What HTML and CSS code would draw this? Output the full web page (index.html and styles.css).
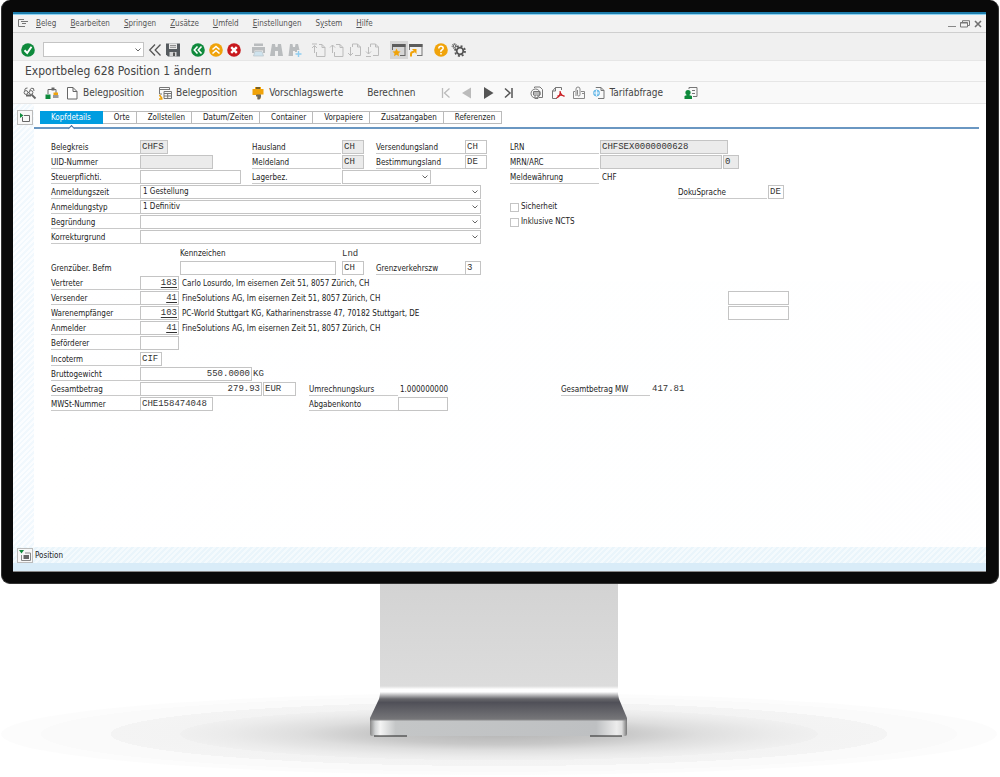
FILE: index.html
```html
<!DOCTYPE html>
<html lang="de">
<head>
<meta charset="utf-8">
<title>Exportbeleg 628 Position 1 ändern</title>
<link rel="stylesheet" href="styles.css">
</head>
<body>
<main class="monitor">
<div class="screen">

<nav class="menubar" aria-label="Menü">
  <button class="icon-small" aria-label="Systemmenü"><svg width="10" height="9" viewBox="0 0 10 9" fill="none" stroke="#777"><path d="M7 7.500H.5V.5H6M3 2.500H10M4 4.500H8"/></svg></button>
  <button><u>B</u>eleg</button>
  <button><u>B</u>earbeiten</button>
  <button><u>S</u>pringen</button>
  <button><u>Z</u>usätze</button>
  <button><u>U</u>mfeld</button>
  <button><u>E</u>instellungen</button>
  <button>S<u>y</u>stem</button>
  <button><u>H</u>ilfe</button>
  <div class="window-buttons">
    <button aria-label="Minimieren"><svg width="8" height="8" viewBox="0 0 8 8" stroke="#888"><path d="M0 6.500H8"/></svg></button>
    <button aria-label="Wiederherstellen"><svg width="10" height="8" viewBox="0 0 10 8" fill="none" stroke="#777"><path d="M.5 2.500H7.500V7H.5ZM.5 3H7.500M2.500 2V.7H9.500V5.500H8"/></svg></button>
    <button aria-label="Schliessen"><svg width="8" height="8" viewBox="0 0 8 8" stroke="#707070" stroke-width="1.600"><path d="M1 1L7 7M7 1L1 7"/></svg></button>
  </div>
</nav>

<div class="toolbar">
  <div class="tools">
    <button aria-label="Weiter"><svg viewBox="0 0 18 18"><circle cx="9" cy="9" r="6.800" fill="#0f8a3c"/><path d="M5.500 9.200L8.200 12L12.500 5.800" fill="none" stroke="#fff" stroke-width="2"/></svg></button>
  </div>
  <select class="command" aria-label="Befehl"><option></option></select>
  <div class="tools">
    <button aria-label="Einklappen"><svg viewBox="0 0 18 18" fill="none" stroke="#555" stroke-width="1.300"><path d="M9 3.500L3.700 9L9 14.500M14.500 3.500L9.200 9L14.500 14.500"/></svg></button>
    <button aria-label="Sichern"><svg viewBox="0 0 18 18"><path d="M2 2.500H16V15.500H4L2 13.500Z" fill="#555a5e"/><path d="M5 2.500H13V8H5Z" fill="#e8e8e8"/><path d="M6 4.500H12M6 6.300H12" stroke="#777" stroke-width=".8"/><path d="M5.500 11H12.500V15.500H5.500Z" fill="#d4d4d4"/><path d="M9 11.500H11V15H9Z" fill="#555"/></svg></button>
  </div>
  <div class="tools">
    <button aria-label="Zurück"><svg viewBox="0 0 18 18"><circle cx="9" cy="9" r="6.800" fill="#0f8a3c"/><path d="M8.500 5.500L5.300 9L8.500 12.500M12.500 5.500L9.300 9L12.500 12.500" fill="none" stroke="#fff" stroke-width="1.600"/></svg></button>
    <button aria-label="Beenden"><svg viewBox="0 0 18 18"><circle cx="9" cy="9" r="6.800" fill="#f0a30a"/><path d="M5.500 8.500L9 5.500L12.500 8.500M5.500 12.500L9 9.500L12.500 12.500" fill="none" stroke="#fff" stroke-width="1.600"/></svg></button>
    <button aria-label="Abbrechen"><svg viewBox="0 0 18 18"><circle cx="9" cy="9" r="6.800" fill="#c8191e"/><path d="M6.200 6.200L11.800 11.800M11.800 6.200L6.200 11.800" stroke="#fff" stroke-width="2.400"/></svg></button>
  </div>
  <div class="tools">
    <button aria-label="Drucken"><svg viewBox="0 0 18 18" fill="#b9bcbe"><path d="M4 2.500H13V5H4ZM2 6H15V12H13V9.500H4.500V12H2Z"/><path d="M5 10.500H12L13.500 15H3.500Z" fill="#cfe3ee" stroke="#b9c4ca" stroke-width=".7"/></svg></button>
    <button aria-label="Suchen"><svg viewBox="0 0 18 18" fill="#b9bcbe"><path d="M4 3H7L7.500 6H9.500L10 3H13L15 15H10V10H7V15H2Z"/></svg></button>
    <button aria-label="Weitersuchen"><svg viewBox="0 0 18 18" fill="#b9bcbe"><path d="M4 3H6.500L7 6H9L9.500 3H12L13.500 9H11V11H9V10H7V15H2.500Z"/><path d="M12.500 10V16M9.500 13H15.500" stroke="#8fcdf0" stroke-width="1.400"/></svg></button>
  </div>
  <div class="tools">
    <button aria-label="Erste Seite"><svg viewBox="0 0 18 18" fill="none" stroke="#bbb"><path d="M8 3.500H11L14 6.500V15.500H5.500V11M11 3.500V6.500H14M3.500 12V5M1 7L3.500 4.500L6 7M1 3H6"/></svg></button>
    <button aria-label="Vorherige Seite"><svg viewBox="0 0 18 18" fill="none" stroke="#bbb"><path d="M7 3.500H11L14 6.500V15.500H5.500V11M11 3.500V6.500H14M3.500 12V4M1 6.500L3.500 4L6 6.500"/></svg></button>
    <button aria-label="Nächste Seite"><svg viewBox="0 0 18 18" fill="none" stroke="#bbb"><path d="M5.500 6V3H10.500L13.500 6V14.500H8M10.500 3V6H13.500M3.500 6V14.500M1 12L3.500 14.500L6 12"/></svg></button>
    <button aria-label="Letzte Seite"><svg viewBox="0 0 18 18" fill="none" stroke="#bbb"><path d="M5.500 6V3H10.500L13.500 6V14.500H8M10.500 3V6H13.500M3.500 6V13M1 10.500L3.500 13L6 10.500M1 15.500H6"/></svg></button>
  </div>
  <div class="tools">
    <button class="pressed" aria-label="Neuer Modus"><svg viewBox="0 0 18 18"><path d="M2 3H15.500V15H10V14H14.500V6H3V9H2Z" fill="#666"/><path d="M2 3H15.500V6H2Z" fill="#5c5c5c"/><path d="M6.500 7.500L7.800 10.200L10.500 10.500L8.500 12.400L9 15.300L6.500 13.800L4 15.300L4.500 12.400L2.500 10.500L5.200 10.200Z" fill="#f0a30a"/></svg></button>
    <button aria-label="Verknüpfung"><svg viewBox="0 0 18 18"><path d="M1 3H14.500V15H9V14H13.500V6H2V9H1Z" fill="#777"/><path d="M1 3H14.500V6H1Z" fill="#5c5c5c"/><path d="M3 15.500V13Q3 10.700 6.500 10.700" fill="none" stroke="#f0a30a" stroke-width="2"/><path d="M4 8H8.500V13Z" fill="#f0a30a"/></svg></button>
  </div>
  <div class="tools">
    <button aria-label="Hilfe"><svg viewBox="0 0 18 18"><circle cx="8" cy="9" r="6.800" fill="#f0a30a"/><path d="M5.800 7.500Q5.800 5.300 8 5.300T10.200 7.300Q10.200 8.300 8.800 9T8 11M8 12V13.500" fill="none" stroke="#fff" stroke-width="1.500"/></svg></button>
    <button aria-label="Anpassen"><svg viewBox="0 0 18 18" fill="none" stroke="#555"><circle cx="9" cy="10" r="3.300" stroke-width="1.800"/><circle cx="9" cy="10" r="5" stroke-width="1.800" stroke-dasharray="1.963 1.963"/><circle cx="3.500" cy="5" r="1.400"/><circle cx="3.500" cy="5" r="2.400" stroke-dasharray="1 .885"/></svg></button>
  </div>
</div>

<h1 class="title">Exportbeleg 628 Position 1 ändern</h1>

<div class="app-toolbar">
  <div class="app-group edit">
    <button class="slot" aria-label="Anzeigen"><svg viewBox="0 0 18 18" fill="none" stroke="#666"><circle cx="5" cy="8.500" r="1.900"/><circle cx="10" cy="8.500" r="1.900"/><path d="M3.500 6.500Q4 3.500 6.500 4M8.500 6.500Q10 3 12.500 4.500L13 7M7 8.500H8"/><path d="M5 11.500H10M10.500 10.500L14.500 14.500" stroke-width="1.800"/></svg></button>
    <button class="slot" aria-label="Hierarchie"><svg viewBox="0 0 18 18"><path d="M5 10V5.500H9M13 9V5.500H11" fill="none" stroke="#666"/><path d="M8.500 3.500H11.500V6.500H8.500Z" fill="#666"/><path d="M2.500 10.500H7.500V15H2.500Z" fill="#0f8a3c"/><path d="M10.500 8.500H15V11H10.500Z" fill="#f0a30a"/><path d="M10 11H15.500V14H10Z" fill="#999"/></svg></button>
    <button><svg viewBox="0 0 18 18" fill="#fff" stroke="#666"><path d="M4.500 3.500H10L14 7.500V15H4.500ZM10 3.500V7.500H14"/></svg>Belegposition</button>
  </div>
  <button><svg viewBox="0 0 18 18" fill="none" stroke="#777"><path d="M6 10H3.500V3.500H13.500V6M3.500 5.500H13M8 7.500H15.500V14.500H8ZM8 9.500H15M11.700 10V14M8 12H15"/><path d="M3.500 11L6 14.500M3 15H6.500" stroke="#f0a30a" stroke-width="1.600"/></svg>Belegposition</button>
  <button><svg viewBox="0 0 18 18"><path d="M6 3H12V5H14.500V10.500H11.500V15H8.500V11H3.500V5H6Z" fill="#f0a30a"/><path d="M7 3H11V5H7Z" fill="#775f25"/><path d="M8 10.500H12V13L10.500 15.500H8.500V12.500H7V11Z" fill="#6e6a60"/></svg>Vorschlagswerte</button>
  <button class="wide">Berechnen</button>
  <div class="app-group steps">
    <button class="slot" aria-label="Erster"><svg viewBox="0 0 18 18" fill="none" stroke="#bbb" stroke-width="1.300"><path d="M5.500 4V14M12.500 4.500L7.500 9L12.500 13.500"/></svg></button>
    <button class="slot" aria-label="Vorheriger"><svg viewBox="0 0 18 18"><path d="M13 3.500V14.500L4 9Z" fill="#bbb"/></svg></button>
    <button class="slot" aria-label="Nächster"><svg viewBox="0 0 18 18"><path d="M5 3V15L14.500 9Z" fill="#555"/></svg></button>
    <button class="slot" aria-label="Letzter"><svg viewBox="0 0 18 18" fill="none" stroke="#555" stroke-width="1.500"><path d="M12 4V14M5 4.500L10 9L5 13.500"/></svg></button>
  </div>
  <div class="app-group docs">
    <button class="slot" aria-label="Druckvorschau"><svg viewBox="0 0 18 18" fill="none" stroke="#777"><circle cx="7.500" cy="9.500" r="4.500"/><path d="M6.500 4V3H12L14.500 5.500V13.500H11M5.500 7.500H12V11H5.500ZM6 9H12M7 11V14.500H10V11"/></svg></button>
    <button class="slot" aria-label="PDF"><svg viewBox="0 0 18 18" fill="none" stroke="#777"><path d="M8 14.500H3.500V7L6.500 3.500H12.500V6M6.500 3.500V7H3.500"/><path d="M7.500 14Q12 12 11 7Q11.500 11 15.500 12.500M8.500 12Q12 10.500 15.500 12" stroke="#c8191e" stroke-width="1.200"/></svg></button>
    <button class="slot" aria-label="Anlagen"><svg viewBox="0 0 18 18" fill="none" stroke="#888"><path d="M5 7.500H3.500V14.500H14.500V7.500H11M6 12V5Q6 3 8 3T10 5V10.500Q10 12 8.700 12T7.500 10.500V6M12 9.500H14"/></svg></button>
    <button><svg viewBox="0 0 18 18" fill="none" stroke="#777"><path d="M6 4V3.500H11L14 6.500V14.500H8M11 3.500V6.500H14"/><circle cx="6.500" cy="9" r="3" fill="#8ccaf0" stroke="#5eb4e4"/><path d="M6.500 6V12M3.500 9H9.500" stroke="#fff" stroke-width=".8"/></svg>Tarifabfrage</button>
  </div>
  <button class="partner" aria-label="Partner"><svg viewBox="0 0 18 18"><path d="M7 5V3.500H15V12.500H11M10 6.500H13M10 9.500H13" fill="none" stroke="#777"/><circle cx="6" cy="8.500" r="2.600" fill="#0f8a3c"/><path d="M2.500 15V12L5 11H7L10 12V15Z" fill="#0f8a3c"/></svg></button>
</div>

<section class="workspace">
  <div class="tab-row">
    <button class="square" aria-label="Detailbereich"><svg width="12" height="10" viewBox="0 0 12 10" fill="none" stroke="#666"><path d="M5 2.500H10.500V8.500H3.500V4"/><path d="M1 0L4.500 2.500L1 5Z" fill="#0f8a3c" stroke="none"/></svg></button>
    <div class="tabs" role="tablist">
      <button role="tab" class="active" aria-selected="true">Kopfdetails</button>
      <button role="tab">Orte</button>
      <button role="tab">Zollstellen</button>
      <button role="tab">Datum/Zeiten</button>
      <button role="tab">Container</button>
      <button role="tab">Vorpapiere</button>
      <button role="tab">Zusatzangaben</button>
      <button role="tab">Referenzen</button>
    </div>
  </div>

  <form class="sheet">
    <label class="lab at-a r1" for="kreis">Belegkreis</label>
    <input class="at-b r1 w28" id="kreis" value="CHFS" readonly>
    <label class="lab at-c r1" for="haus">Hausland</label>
    <input class="at-d r1 w22" id="haus" value="CH" readonly>
    <label class="lab at-e r1" for="vland">Versendungsland</label>
    <input class="at-f r1 w22" id="vland" value="CH">
    <label class="lab at-g r1" for="lrn">LRN</label>
    <input class="at-h r1 w128" id="lrn" value="CHFSEX0000000628" readonly>

    <label class="lab at-a r2" for="uid">UID-Nummer</label>
    <input class="at-b r2 w73" id="uid" readonly>
    <label class="lab at-c r2" for="melde">Meldeland</label>
    <input class="at-d r2 w22" id="melde" value="CH" readonly>
    <label class="lab at-e r2" for="bland">Bestimmungsland</label>
    <input class="at-f r2 w22" id="bland" value="DE">
    <label class="lab at-g r2" for="mrn">MRN/ARC</label>
    <div class="pair at-h r2"><input class="w122" id="mrn" readonly><input class="w16" aria-label="MRN Version" value="0" readonly></div>

    <label class="lab at-a r3" for="steuer">Steuerpflichti.</label>
    <input class="at-b r3 w101" id="steuer">
    <label class="lab at-c r3" for="lager">Lagerbez.</label>
    <select class="at-d r3 w89" id="lager"><option></option></select>
    <span class="lab at-g r3">Meldewährung</span>
    <output class="val at-h r3">CHF</output>

    <label class="lab at-a r4" for="zeit">Anmeldungszeit</label>
    <select class="at-b r4 w341" id="zeit"><option>1 Gestellung</option></select>
    <label class="lab at-i r4" for="sprache">DokuSprache</label>
    <input class="at-j r4 w16" id="sprache" value="DE">

    <label class="lab at-a r5" for="typ">Anmeldungstyp</label>
    <select class="at-b r5 w341" id="typ"><option>1 Definitiv</option></select>
    <label class="check at-g r5"><input type="checkbox">Sicherheit</label>

    <label class="lab at-a r6" for="grund">Begründung</label>
    <select class="at-b r6 w341" id="grund"><option></option></select>
    <label class="check at-g r6"><input type="checkbox">Inklusive NCTS</label>

    <label class="lab at-a r7" for="korr">Korrekturgrund</label>
    <select class="at-b r7 w341" id="korr"><option></option></select>

    <label class="head at-k r8" for="kennz">Kennzeichen</label>
    <label class="head mono at-d r8" for="lnd">Lnd</label>

    <span class="lab bare at-a r9">Grenzüber. Befm</span>
    <input class="at-k r9 w156" id="kennz">
    <input class="at-d r9 w22" id="lnd" value="CH">
    <label class="lab at-e r9" for="verkehr">Grenzverkehrszw</label>
    <input class="at-f r9 w16" id="verkehr" value="3">

    <label class="lab at-a r10" for="vertreter">Vertreter</label>
    <div class="pair at-b r10"><input class="w39 num link" id="vertreter" value="183"><output class="val">Carlo Losurdo, Im eisernen Zeit 51, 8057 Zürich, CH</output></div>

    <label class="lab at-a r11" for="versender">Versender</label>
    <div class="pair at-b r11"><input class="w39 num link" id="versender" value="41"><output class="val">FineSolutions AG, Im eisernen Zeit 51, 8057 Zürich, CH</output></div>
    <input class="at-x r11 w61" aria-label="Referenz Versender">

    <label class="lab at-a r12" for="empf">Warenempfänger</label>
    <div class="pair at-b r12"><input class="w39 num link" id="empf" value="103"><output class="val">PC-World Stuttgart KG, Katharinenstrasse 47, 70182 Stuttgart, DE</output></div>
    <input class="at-x r12 w61" aria-label="Referenz Warenempfänger">

    <label class="lab at-a r13" for="anmelder">Anmelder</label>
    <div class="pair at-b r13"><input class="w39 num link" id="anmelder" value="41"><output class="val">FineSolutions AG, Im eisernen Zeit 51, 8057 Zürich, CH</output></div>

    <label class="lab at-a r14" for="bef">Beförderer</label>
    <input class="at-b r14 w39" id="bef">

    <label class="lab at-a r15" for="inco">Incoterm</label>
    <input class="at-b r15 w22" id="inco" value="CIF">

    <label class="lab at-a r16" for="brutto">Bruttogewicht</label>
    <div class="pair at-b r16"><input class="w112 num" id="brutto" value="550.0000"><span class="mono">KG</span></div>

    <label class="lab at-a r17" for="betrag">Gesamtbetrag</label>
    <div class="pair at-b r17"><input class="w122 num" id="betrag" value="279.93"><input class="w33" aria-label="Währung" value="EUR"></div>
    <span class="lab at-u r17">Umrechnungskurs</span>
    <output class="val at-v r17">1.000000000</output>
    <span class="lab at-m r17">Gesamtbetrag MW</span>
    <output class="val mono at-w r17">417.81</output>

    <label class="lab at-a r18" for="mwst">MWSt-Nummer</label>
    <input class="at-b r18 w73" id="mwst" value="CHE158474048">
    <label class="lab at-u r18" for="konto">Abgabenkonto</label>
    <input class="at-v r18 w50" id="konto">
  </form>
</section>

<footer class="position-bar">
  <button class="square" aria-label="Position aufklappen"><svg width="12" height="11" viewBox="0 0 12 11"><path d="M0 0H5L2.500 3.500Z" fill="#0f8a3c"/><path d="M2.500 5V10.500H11.500V3H6" fill="none" stroke="#888"/><path d="M4.500 5H10V9H4.500Z" fill="#666"/></svg></button>
  <span>Position</span>
</footer>
</div>
</main>

<svg class="stand" viewBox="0 0 1000 194" aria-hidden="true">
  <defs>
    <radialGradient id="shade">
      <stop offset="0" stop-color="#b6b6b6"/><stop offset=".25" stop-color="#c8c8c8"/><stop offset=".4" stop-color="#dedede"/>
      <stop offset=".55" stop-color="#ebebeb"/><stop offset=".64" stop-color="#f0f0f0"/><stop offset=".64" stop-color="#f3f3f3"/>
      <stop offset=".78" stop-color="#f4f4f4"/><stop offset=".78" stop-color="#fafafa"/><stop offset=".92" stop-color="#fafafa"/>
      <stop offset=".92" stop-color="#fcfcfc"/><stop offset="1" stop-color="#fcfcfc"/>
    </radialGradient>
    <linearGradient id="neck" x2="0" y2="1"><stop offset="0" stop-color="#d3d3d3"/><stop offset="1" stop-color="#dcdcdc"/></linearGradient>
    <linearGradient id="bend" x2="0" y2="1"><stop offset="0" stop-color="#dcdcdc"/><stop offset=".25" stop-color="#fff"/><stop offset=".45" stop-color="#fff"/><stop offset="1" stop-color="#66666a"/></linearGradient>
    <linearGradient id="slope" x2="0" y2="1"><stop offset="0" stop-color="#66666a"/><stop offset=".15" stop-color="#505058"/><stop offset="1" stop-color="#7c7c7e"/></linearGradient>
    <linearGradient id="plate"><stop offset="0" stop-color="#888"/><stop offset=".02" stop-color="#d0d2d3"/><stop offset=".04" stop-color="#f4f4f4"/><stop offset=".1" stop-color="#c4c6c7"/><stop offset=".88" stop-color="#bec0c2"/><stop offset=".96" stop-color="#ececec"/><stop offset=".98" stop-color="#ddd"/><stop offset="1" stop-color="#777"/></linearGradient>
  </defs>
  <ellipse cx="499" cy="150" rx="498" ry="41" fill="url(#shade)"/>
  <path d="M380 0H618V103H380Z" fill="url(#neck)"/>
  <path d="M380 102H618V110L619 115H379L380 110Z" fill="url(#bend)"/>
  <path d="M379 115H619L627 134V138H370V134Z" fill="url(#slope)"/>
  <rect x="370" y="136" width="257" height="16" rx="2" fill="url(#plate)"/>
  <path d="M371 136H626" stroke="#8b8b8d"/>
  <path d="M374 152H407M590 152H622" stroke="#222"/>
</svg>
</body>
</html>
```
FILE: styles.css
```css
* { box-sizing: border-box; }

body {
  margin: 0;
  background: #fff;
  color: #222;
  font: 8px/14px "DejaVu Sans Condensed", "Noto Sans", sans-serif;
}

button, input, select {
  margin: 0;
  border: 0;
  border-radius: 0;
  background: none;
  color: inherit;
  font: inherit;
}

button { padding: 0; }
svg { display: block; flex: none; }

.monitor {
  margin: 0 1px;
  padding: 12px 12px 11px 11px;
  border: 1px solid #333;
  border-top-width: 0;
  border-radius: 9px;
  background: #090909;
}

.screen {
  border-top: 2px solid #1c7cab;
  border-bottom: 1px solid #888;
  background: #fff;
}

.menubar {
  display: flex;
  align-items: center;
  gap: 14px;
  height: 19px;
  padding: 0 4px 0 5px;
  border-top: 1px solid #8fd3f2;
  border-bottom: 1px solid #cfcfcf;
  background: #f2f2f2;
  color: #555;
}
.menubar .icon-small { margin-right: -6px; }
.menubar u { text-underline-offset: 1px; }
.window-buttons { display: flex; gap: 4px; margin-left: auto; }

.toolbar {
  display: flex;
  align-items: center;
  gap: 7px;
  height: 28px;
  padding: 6px 6px 0;
  border-bottom: 1px solid #e6e6e6;
  background: #f0f0f0;
}
.tools { display: flex; }
.tools svg, .app-toolbar svg { width: 18px; height: 18px; }
.tools .pressed { background: #d6d6d6; }
.toolbar .command { width: 101px; height: 15px; margin: 0 -5px 0 -1px; }

.title {
  margin: 0;
  padding: 0 12px;
  border-bottom: 1px solid #e6e6e6;
  background: #f9f9f9;
  color: #444;
  font-size: 12px;
  font-weight: normal;
  line-height: 20px;
}

.app-toolbar {
  display: flex;
  align-items: center;
  gap: 12px;
  height: 22px;
  padding: 0 6px;
  border-bottom: 1px solid #e6e6e6;
  background: #f9f9f9;
  color: #444;
  font-size: 10px;
}
.app-toolbar button { display: flex; align-items: center; gap: 2px; }
.app-group { display: flex; }
.edit { gap: 1px; }
.app-toolbar .slot { width: 21px; justify-content: center; }
.app-toolbar .wide { margin: 0 8px 0 12px; }
.app-toolbar .docs { margin-left: -5px; }
.app-toolbar .partner { margin-left: 7px; }

.workspace {
  min-height: 443px;
  padding: 6px 7px 0 4px;
  background:
    linear-gradient(90deg, transparent 21px, #fff 21px) 0 0 / 100% 40% no-repeat,
    linear-gradient(90deg, transparent 21px, rgb(255 255 255 / .7) 21px),
    linear-gradient(90deg, transparent 21px, #fff 21px, transparent 400%),
    repeating-linear-gradient(135deg, #f1f8fd 0 2px, #fbfdff 2px 4px);
}

.tab-row { display: flex; }
.square {
  display: grid;
  place-items: center;
  width: 16px;
  height: 15px;
  border: 1px solid #bbb;
  background: #f8f8f8;
}

.tabs {
  display: flex;
  flex: 1;
  height: 19px;
  margin-left: 1px;
  padding: 1px 0 3px 6px;
  border-bottom: 2px solid #6a97c2;
}
.tabs button {
  padding: 0 6px 0 11px;
  border: 1px solid #bbb;
  border-left-width: 0;
  background: #fff;
  line-height: 12px;
}
.tabs .active {
  position: relative;
  padding: 0 11px;
  border-color: #009de0;
  background: #009de0;
  color: #fff;
}
.tabs .active::after {
  content: "";
  position: absolute;
  top: 14px;
  left: calc(50% - 2px);
  width: 4px;
  height: 4px;
  border: 1px solid #3d6c9e;
  border-width: 1px 0 0 1px;
  background: #fff;
  transform: rotate(45deg);
}

.sheet {
  display: grid;
  grid-template-columns:
    [a] 89px [b] 40px [k] 72px [c] 57px [u] 33px [d] 34px [e] 22px [v] 67px
    [f] 45px [g] 51px [m] 39px [h] 50px [w] 28px [i] 50px [x] 40px [j] 22px;
  grid-template-rows: repeat(7, 15px) 16px repeat(5, 15px) 16px repeat(4, 15px);
  align-items: start;
  justify-items: start;
  margin: 11px 0 0 34px;
}

input, select, .lab, .val, .head, .check { height: 14px; }
.lab, .val, .head, .check { white-space: nowrap; line-height: 16px; }
.lab { width: 89px; border-bottom: 1px solid #c9c9c9; }
.sheet .bare { border-bottom-color: transparent; }
.sheet .head { line-height: 18px; }
.val { padding: 0 2px; }
.pair { display: flex; gap: 1px; }

input, .mono {
  color: #333;
  font: 9px/12px "Liberation Mono", monospace;
}
input {
  padding: 0 1px;
  border: 1px solid #c4c4c4;
  background: #fff;
}
input:read-only { background: #ebebeb; }
.mono { line-height: 15px; }
.num { text-align: right; }
.link { text-decoration: underline; text-underline-offset: 2px; }

select {
  appearance: none;
  padding: 0 2px;
  border: 1px solid #c4c4c4;
  background: #fff url("data:image/svg+xml,%3Csvg xmlns='http://www.w3.org/2000/svg' width='6' height='4'%3E%3Cpath d='M.5 .5L3 3L5.500 .5' fill='none' stroke='%23666'/%3E%3C/svg%3E") no-repeat right 2px center;
  line-height: 12px;
}

.check { display: flex; align-items: center; gap: 2px; }
.check input {
  appearance: none;
  width: 9px;
  height: 9px;
  background: #fff;
}

.w16 { width: 16px; }
.w22 { width: 22px; }
.w28 { width: 28px; }
.w33 { width: 33px; }
.w39 { width: 39px; }
.w50 { width: 50px; }
.w61 { width: 61px; }
.w73 { width: 73px; }
.w89 { width: 89px; }
.w101 { width: 101px; }
.w112 { width: 112px; }
.w122 { width: 122px; }
.w128 { width: 128px; }
.w156 { width: 156px; }
.w341 { width: 341px; }

.at-a { grid-column: a; }
.at-b { grid-column: b; }
.at-k { grid-column: k; }
.at-c { grid-column: c; }
.at-u { grid-column: u; }
.at-d { grid-column: d; }
.at-e { grid-column: e; }
.at-v { grid-column: v; }
.at-f { grid-column: f; }
.at-g { grid-column: g; }
.at-m { grid-column: m; }
.at-h { grid-column: h; }
.at-w { grid-column: w; }
.at-i { grid-column: i; }
.at-x { grid-column: x; }
.at-j { grid-column: j; }

.r1 { grid-row: 1; }
.r2 { grid-row: 2; }
.r3 { grid-row: 3; }
.r4 { grid-row: 4; }
.r5 { grid-row: 5; }
.r6 { grid-row: 6; }
.r7 { grid-row: 7; }
.r8 { grid-row: 8; }
.r9 { grid-row: 9; }
.r10 { grid-row: 10; }
.r11 { grid-row: 11; }
.r12 { grid-row: 12; }
.r13 { grid-row: 13; }
.r14 { grid-row: 14; }
.r15 { grid-row: 15; }
.r16 { grid-row: 16; }
.r17 { grid-row: 17; }
.r18 { grid-row: 18; }

.position-bar {
  display: flex;
  align-items: center;
  gap: 2px;
  padding: 1px 4px 0;
  border-bottom: 8px solid #d9ecf8;
  background: repeating-linear-gradient(135deg, #eaf5fb 0 2px, #f4fafd 2px 4px);
}

.stand { width: 100%; }
```
